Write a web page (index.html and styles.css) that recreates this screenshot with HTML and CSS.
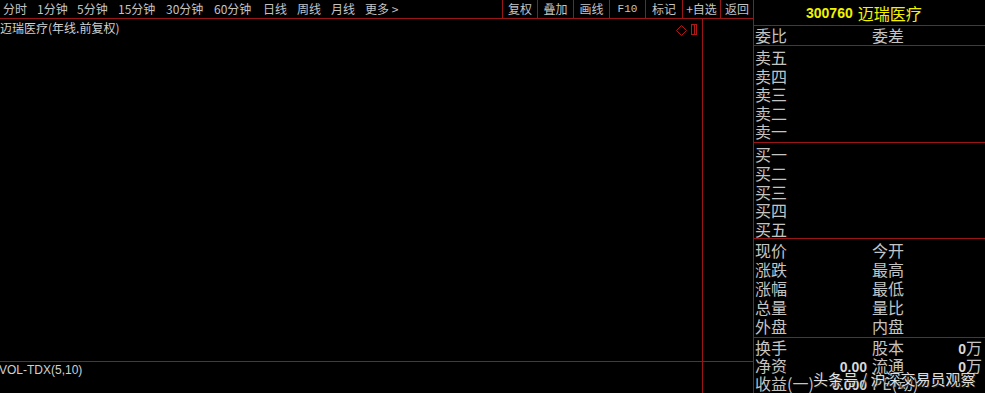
FILE: index.html
```html
<!DOCTYPE html>
<html lang="zh-CN">
<head>
<meta charset="utf-8">
<title>迈瑞医疗</title>
<link rel="stylesheet" href="styles.css">
</head>
<body>
<div class="app">
  <div class="main">
    <div class="toolbar">
      <div class="periods">
        <span class="p p1">分时</span>
        <span class="p p2">1分钟</span>
        <span class="p p3">5分钟</span>
        <span class="p p4">15分钟</span>
        <span class="p p5">30分钟</span>
        <span class="p p6">60分钟</span>
        <span class="p p7">日线</span>
        <span class="p p8">周线</span>
        <span class="p p9">月线</span>
        <span class="p p10">更多 &gt;</span>
      </div>
      <div class="buttons">
        <span class="btn b1">复权</span>
        <span class="btn b2">叠加</span>
        <span class="btn b3">画线</span>
        <span class="btn b4 latin">F10</span>
        <span class="btn b5">标记</span>
        <span class="btn b6">+自选</span>
        <span class="btn b7">返回</span>
      </div>
    </div>
    <div class="charts">
      <div class="pane price">
        <div class="chart-head">
          <span class="title">迈瑞医疗(年线.前复权)</span>
          <svg class="icons" width="22" height="14" viewBox="0 0 22 14">
            <path d="M5.5 2.5 L10.5 7.5 L5.5 12.5 L0.5 7.5 Z" fill="none" stroke="#b01818" stroke-width="1"/>
            <rect x="15.5" y="1.5" width="5" height="10" fill="none" stroke="#b01818" stroke-width="1"/>
            <line x1="18.5" y1="2" x2="18.5" y2="11" stroke="#b01818" stroke-width="1"/>
          </svg>
        </div>
      </div>
      <div class="pane side"></div>
      <div class="pane vol"><span class="vol-label">VOL-TDX(5,10)</span></div>
      <div class="pane side-low"></div>
    </div>
  </div>
  <div class="quote">
    <div class="q-head"><span class="code">300760</span><span class="name">迈瑞医疗</span></div>
    <div class="q-sec q-ratio">
      <div class="row"><span class="half"><span>委比</span></span><span class="half"><span>委差</span></span></div>
    </div>
    <div class="q-sec q-sell">
      <div class="row">卖五</div>
      <div class="row">卖四</div>
      <div class="row">卖三</div>
      <div class="row">卖二</div>
      <div class="row">卖一</div>
    </div>
    <div class="q-sec q-buy">
      <div class="row">买一</div>
      <div class="row">买二</div>
      <div class="row">买三</div>
      <div class="row">买四</div>
      <div class="row">买五</div>
    </div>
    <div class="q-sec q-stats">
      <div class="row"><span class="half"><span>现价</span></span><span class="half"><span>今开</span></span></div>
      <div class="row"><span class="half"><span>涨跌</span></span><span class="half"><span>最高</span></span></div>
      <div class="row"><span class="half"><span>涨幅</span></span><span class="half"><span>最低</span></span></div>
      <div class="row"><span class="half"><span>总量</span></span><span class="half"><span>量比</span></span></div>
      <div class="row"><span class="half"><span>外盘</span></span><span class="half"><span>内盘</span></span></div>
    </div>
    <div class="q-sec q-bottom">
      <div class="row"><span class="half"><span>换手</span></span><span class="half"><span>股本</span><span class="val"><b>0</b>万</span></span></div>
      <div class="row"><span class="half"><span>净资</span><span class="val"><b>0.00</b></span></span><span class="half"><span>流通</span><span class="val"><b>0</b>万</span></span></div>
      <div class="row"><span class="half"><span>收益(一)</span><span class="val"><b>0.000</b></span></span><span class="half"><span>PE(动)</span></span></div>
    </div>
  </div>
  <div class="watermark">头条号 / 沪深交易员观察</div>
</div>
</body>
</html>
```
FILE: styles.css
```css
html, body {
  margin: 0;
  padding: 0;
  background: #000;
}
body {
  width: 985px;
  height: 393px;
  overflow: hidden;
  font-family: "Noto Sans CJK SC", "Noto Sans", sans-serif;
  color: #c4c4c4;
}
.app {
  position: relative;
  display: flex;
  width: 985px;
  height: 393px;
}
.main {
  width: 753px;
  display: flex;
  flex-direction: column;
}
.toolbar {
  height: 18px;
  border-bottom: 1px solid #9a1616;
  display: flex;
  justify-content: space-between;
  font-size: 12px;
  line-height: 18px;
}
.periods {
  display: flex;
  padding-left: 3px;
  white-space: nowrap;
}
.p { display: block; }
.p1 { width: 34px; }
.p2 { width: 40px; }
.p3 { width: 41px; }
.p4 { width: 48px; }
.p5 { width: 48px; }
.p6 { width: 49px; }
.p7 { width: 34px; }
.p8 { width: 34px; }
.p9 { width: 34px; }
.buttons {
  display: flex;
}
.btn {
  display: block;
  box-sizing: border-box;
  border-left: 1px solid #9a1616;
  text-align: center;
  white-space: nowrap;
}
.latin { font-family: "Liberation Mono", monospace; font-size: 11px; }
.b1 { width: 35px; }
.b2 { width: 36px; }
.b3 { width: 36px; }
.b4 { width: 36px; }
.b5 { width: 37px; }
.b6 { width: 38px; }
.b7 { width: 33px; }

.charts {
  flex: 1;
  display: grid;
  grid-template-columns: 703px 50px;
  grid-template-rows: 343px 31px;
}
.pane { box-sizing: border-box; }
.price, .vol { border-right: 1px solid #9a1616; }
.price, .side { border-bottom: 1px solid #9a1616; }
.chart-head {
  display: flex;
  justify-content: space-between;
  height: 18px;
  padding-right: 4px;
}
.title {
  font-size: 12px;
  line-height: 18px;
  color: #d0d0d0;
}
.icons {
  margin-top: 4px;
  display: block;
}
.vol-label {
  display: block;
  font-family: "Liberation Sans", Arial, sans-serif;
  font-size: 12px;
  line-height: 16px;
  color: #d0d0d0;
  margin-left: -1px;
}

.quote {
  width: 232px;
  box-sizing: border-box;
  border-left: 1px solid #9a1616;
  display: flex;
  flex-direction: column;
  font-size: 16px;
}
.q-head {
  height: 25px;
  border-bottom: 1px solid #9a1616;
  display: flex;
  align-items: center;
  padding-left: 52px;
  color: #f2f200;
}
.code {
  font-family: "Liberation Sans", Arial, sans-serif;
  font-weight: bold;
  font-size: 14px;
  margin-right: 5px;
}
.name { font-size: 16px; line-height: 20px; }
.q-sec {
  box-sizing: border-box;
  border-bottom: 1px solid #9a1616;
  padding-left: 1px;
}
.row {
  display: flex;
  white-space: nowrap;
}
.half {
  display: flex;
  justify-content: space-between;
}
.half:first-child { width: 117px; padding-right: 5px; box-sizing: border-box; }
.half:last-child { flex: 1; padding-right: 3px; }
.q-ratio { height: 20px; }
.q-ratio .row { line-height: 19px; }
.q-sell { height: 97px; padding-top: 2px; }
.q-sell .row { height: 18.5px; line-height: 18.5px; }
.q-buy { height: 96px; padding-top: 2px; }
.q-buy .row { height: 18.75px; line-height: 18.75px; }
.q-stats { height: 99px; padding-top: 2px; }
.q-stats .row { height: 19px; line-height: 19px; }
.q-bottom { border-bottom: none; flex: 1; }
.q-bottom .row { height: 18px; line-height: 18px; }
.val b {
  font-family: "Liberation Sans", Arial, sans-serif;
  font-size: 14px;
  font-weight: bold;
  color: #d8d8d8;
}

.watermark {
  position: absolute;
  left: 813px;
  top: 370px;
  font-size: 15px;
  line-height: 18px;
  color: rgba(255, 255, 255, 0.88);
  text-shadow: 0 0 2px #000, 1px 1px 1px #333;
  white-space: nowrap;
}
```
